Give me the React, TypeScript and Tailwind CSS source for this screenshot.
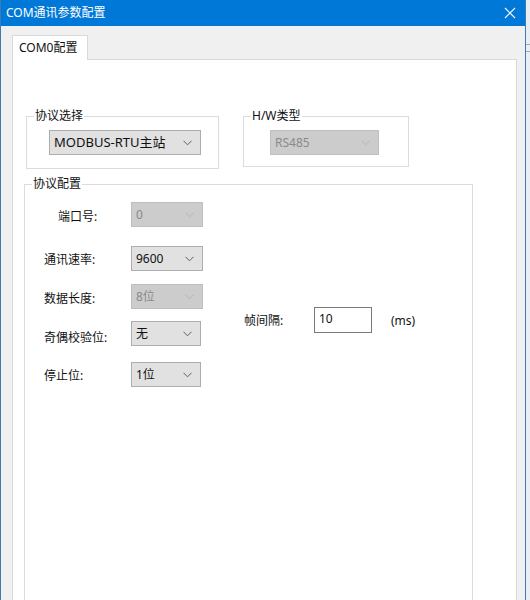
import React from 'react';

const font = { fontFamily: '"Noto Sans", "Noto Sans CJK SC", sans-serif' };

function Chevron({ disabled }: { disabled?: boolean }) {
  return (
    <svg width="9" height="6" viewBox="0 0 9 6" className="shrink-0">
      <polyline
        points="0.5,0.8 4.5,4.8 8.5,0.8"
        fill="none"
        stroke={disabled ? '#b4b4b4' : '#5e5e5e'}
        strokeWidth="1"
      />
    </svg>
  );
}

function Select({
  value,
  width,
  disabled,
  big,
}: {
  value: string;
  width: string;
  disabled?: boolean;
  big?: boolean;
}) {
  return (
    <div
      className={`${width} h-[25px] flex items-center justify-between pl-[4px] pr-[8px] border ${
        disabled
          ? 'bg-[#cccccc] border-[#bfbfbf] text-[#8a8a8a]'
          : 'bg-[#e1e1e1] border-[#adadad] text-[#111]'
      } ${big ? 'text-[13px]' : 'text-[12px]'} leading-none`}
    >
      <span>{value}</span>
      <Chevron disabled={disabled} />
    </div>
  );
}

function Group({
  title,
  className,
  inner,
  children,
}: {
  title: string;
  className: string;
  inner: string;
  children: React.ReactNode;
}) {
  return (
    <fieldset className={`border border-[#dcdcdc] ${className}`}>
      <legend className="ml-[7px] px-[1px] text-[12px] leading-[16px] text-[#111]">{title}</legend>
      <div className={inner}>{children}</div>
    </fieldset>
  );
}

function Row({
  label,
  labelClass,
  children,
  className,
}: {
  label: string;
  labelClass?: string;
  children: React.ReactNode;
  className?: string;
}) {
  return (
    <div className={`flex items-start ${className ?? ''}`}>
      <div className={`w-[87px] text-[12px] leading-[16px] text-[#111] ${labelClass ?? 'mt-[6px]'}`}>
        {label}
      </div>
      {children}
    </div>
  );
}

export default function App() {
  return (
    <div className="w-[530px] h-[600px] overflow-hidden flex bg-[#e9eef5]" style={font}>
      <div className="w-[526px] h-full flex flex-col border-l border-r border-[#3d7bb5] bg-[#f0f0f0]">
        {/* title bar */}
        <div className="h-[26px] shrink-0 bg-[#0078d7] flex items-center justify-between pl-[5px] pr-[9px] text-white">
          <span className="text-[12px] leading-none">COM通讯参数配置</span>
          <svg width="12" height="12" viewBox="0 0 12 12">
            <path d="M1 1 L11 11 M11 1 L1 11" stroke="#fff" strokeWidth="1.1" />
          </svg>
        </div>

        {/* tabs */}
        <div className="flex-1 flex flex-col pl-[11px] pr-[8px] pt-[9px]">
          <div className="flex">
            <div className="h-[25px] w-[76px] bg-white border border-b-0 border-[#d9d9d9] flex items-center pl-[6px] text-[12px] text-[#111] -mb-px relative">
              COM0配置
            </div>
          </div>
          <div className="flex-1 bg-white border border-[#d9d9d9] pl-[11px] pt-[48px]">
            <div className="flex items-start ml-[2px] gap-[24px]">
              <Group title="协议选择" className="w-[193px] h-[61px]" inner="pl-[22px] pt-[6px]">
                <Select value="MODBUS-RTU主站" width="w-[152px]" big />
              </Group>
              <Group title="H/W类型" className="w-[166px] h-[59px]" inner="pl-[26px] pt-[6px]">
                <Select value="RS485" width="w-[109px]" disabled />
              </Group>
            </div>

            <Group title="协议配置" className="mt-[7px] w-[449px] h-[500px]" inner="pl-[19px] pt-[10px]">
              <div className="flex items-start">
                <div className="flex flex-col">
                  <Row label="端口号:" labelClass="mt-[7px] pl-[14px]">
                    <Select value="0" width="w-[72px]" disabled />
                  </Row>
                  <Row label="通讯速率:" className="mt-[19px]" labelClass="mt-[6px]">
                    <Select value="9600" width="w-[72px]" />
                  </Row>
                  <Row label="数据长度:" className="mt-[13px]" labelClass="mt-[7px]">
                    <Select value="8位" width="w-[72px]" disabled />
                  </Row>
                  <Row label="奇偶校验位:" className="mt-[12px]" labelClass="mt-[9px]">
                    <Select value="无" width="w-[70px]" />
                  </Row>
                  <Row label="停止位:" className="mt-[16px]" labelClass="mt-[6px]">
                    <Select value="1位" width="w-[70px]" />
                  </Row>
                </div>
                <div className="ml-[41px] mt-[105px] flex items-center text-[12px] text-[#111]">
                  <span className="w-[70px] mt-[1px]">帧间隔:</span>
                  <div className="w-[58px] h-[26px] bg-white border border-[#7a7a7a] flex items-center pl-[4px] text-[12px] pb-[3px]">
                    10
                  </div>
                  <span className="ml-[19px] mt-[1px]">(ms)</span>
                </div>
              </div>
            </Group>
          </div>
        </div>
      </div>
      <div className="flex-1 flex flex-col">
        <div className="h-[44px]" />
        <div className="h-px bg-[#a0a8b4]" />
        <div className="h-[6px]" />
        <div className="h-px bg-[#a0a8b4]" />
      </div>
    </div>
  );
}
